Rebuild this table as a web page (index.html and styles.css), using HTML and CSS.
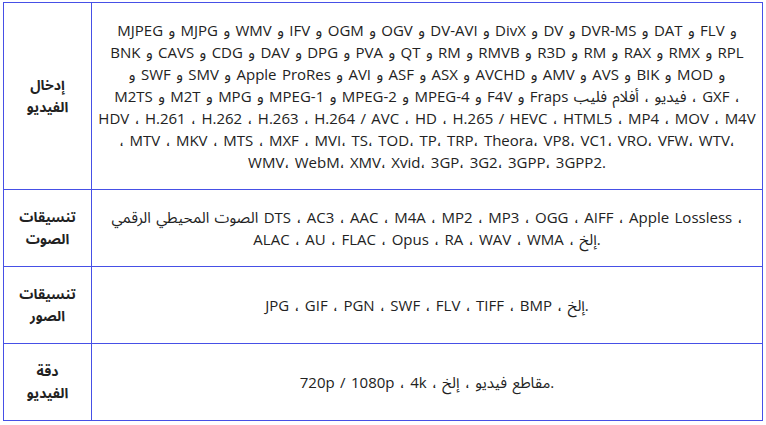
FILE: index.html
```html
<!DOCTYPE html>
<html lang="ar">
<head>
<meta charset="utf-8">
<link rel="stylesheet" href="styles.css">
</head>
<body>
<table class="specs">
  <tr>
    <th class="label">إدخال<br>الفيديو</th>
    <td class="value">
      <div class="line">MJPEG و MJPG و WMV و IFV و OGM و OGV و DV-AVI و DivX و DV و DVR-MS و DAT و FLV و</div>
      <div class="line">BNK و CAVS و CDG و DAV و DPG و PVA و QT و RM و RMVB و R3D و RM و RAX و RMX و RPL</div>
      <div class="line">و SWF و SMV و Apple ProRes و AVI و ASF و ASX و AVCHD و AMV و AVS و BIK و MOD و</div>
      <div class="line">M2TS و M2T و MPG و MPEG-1 و MPEG-2 و MPEG-4 و F4V و Fraps فيديو ، أفلام فليب ، GXF ،</div>
      <div class="line">HDV ، H.261 ، H.262 ، H.263 ، H.264 / AVC ، HD ، H.265 / HEVC ، HTML5 ، MP4 ، MOV ، M4V</div>
      <div class="line">، MTV ، MKV ، MTS ، MXF ، MVI، TS، TOD، TP، TRP، Theora، VP8، VC1، VRO، VFW، WTV،</div>
      <div class="line">WMV، WebM، XMV، Xvid، 3GP، 3G2، 3GPP، 3GPP2.</div>
    </td>
  </tr>
  <tr>
    <th class="label">تنسيقات<br>الصوت</th>
    <td class="value">
      <div class="line">الصوت المحيطي الرقمي DTS ، AC3 ، AAC ، M4A ، MP2 ، MP3 ، OGG ، AIFF ، Apple Lossless ،</div>
      <div class="line">ALAC ، AU ، FLAC ، Opus ، RA ، WAV ، WMA ، إلخ.</div>
    </td>
  </tr>
  <tr>
    <th class="label">تنسيقات<br>الصور</th>
    <td class="value">
      <div class="line">JPG ، GIF ، PGN ، SWF ، FLV ، TIFF ، BMP ، إلخ.</div>
    </td>
  </tr>
  <tr>
    <th class="label">دقة<br>الفيديو</th>
    <td class="value">
      <div class="line">720p / 1080p ، 4k ، مقاطع فيديو ، إلخ.</div>
    </td>
  </tr>
</table>
</body>
</html>
```

FILE: styles.css
```css
html, body {
  margin: 0;
  padding: 0;
  background: #ffffff;
}

body {
  padding: 2px 3px;
  font-family: "Open Sans", "Noto Sans Arabic", sans-serif;
  font-size: 15px;
  line-height: 22px;
  color: #222222;
}

.specs {
  width: 760px;
  border-collapse: collapse;
  table-layout: fixed;
}

.specs th,
.specs td {
  border: 1px solid #4650e6;
  padding: 16px 4px;
  text-align: center;
  vertical-align: middle;
}

.specs .label {
  width: 79px;
  font-size: 14px;
  font-weight: bold;
  direction: rtl;
}

.specs .value {
  font-weight: normal;
}

.line {
  white-space: nowrap;
  direction: ltr;
  word-spacing: 1.5px;
}
```
